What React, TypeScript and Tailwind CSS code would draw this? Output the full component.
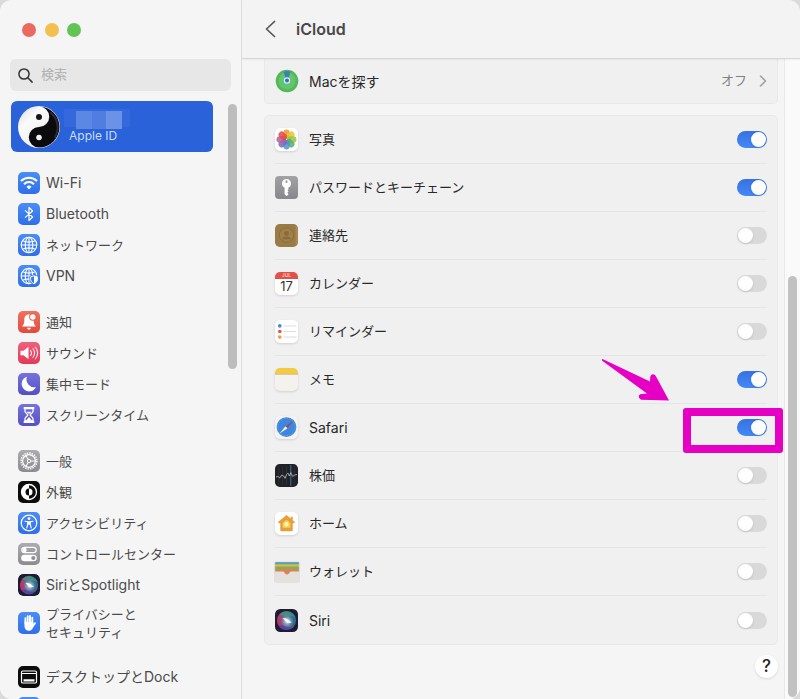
import type { ReactNode } from "react";

const BLUE = "bg-linear-to-b from-[#4a8df6] to-[#2f6fea]";
const RED = "bg-linear-to-b from-[#f0705f] to-[#e24a3d]";
const PINK = "bg-linear-to-b from-[#f0607c] to-[#e23a58]";
const INDIGO = "bg-linear-to-b from-[#7672dc] to-[#5450c4]";
const GRAY = "bg-linear-to-b from-[#acacb0] to-[#8b8b90]";
const BLACK = "bg-[#0c0c0c]";

// Japanese glyphs are full-width, so labels without any Latin run a size smaller
const labelSize = (text: string) => (/[A-Za-z]/.test(text) ? "text-[14px]" : "text-[13px]");

function Globe() {
  return (
    <g fill="none" stroke="#fff" strokeWidth="1.1">
      <circle cx="11" cy="11" r="7.8" />
      <ellipse cx="11" cy="11" rx="3.8" ry="7.8" />
      <path d="M11 3.2v15.6M3.2 11h15.6M4.6 6.8q6.4 2.6 12.8 0M4.6 15.2q6.4 -2.6 12.8 0" />
    </g>
  );
}

function WifiGlyph() {
  return (
    <g fill="none" stroke="#fff" strokeWidth="2">
      <path d="M3 9a11.5 11.5 0 0 1 16 0" />
      <path d="M6 12.2a7 7 0 0 1 10 0" />
      <path d="M11 17.4l-2.5-2.7a3.5 3.5 0 0 1 5 0z" fill="#fff" stroke="none" />
    </g>
  );
}

function BluetoothGlyph() {
  return <path d="M7 7.4l7.6 6.6-3.6 3.6V4.4l3.6 3.6L7 14.600" fill="none" stroke="#fff" strokeWidth="1.2" strokeLinejoin="round" />;
}

function VpnGlyph() {
  return (
    <>
      <Globe />
      <path d="M16 9.5l4.500 1.5v3.500q0 3.500-4.500 5.500-4.500-2-4.500-5.500V11z" fill="#3777ec" />
      <path d="M16 10.800l3.400 1.100v2.700q0 2.600-3.400 4.200-3.400-1.600-3.400-4.200v-2.700z" fill="none" stroke="#fff" strokeWidth="1" />
      <path d="M16 10.800l3.400 1.100v2.700q0 2.600-3.400 4.200z" fill="#fff" />
    </>
  );
}

function BellGlyph() {
  return (
    <>
      <path d="M11 3.5c-3.2 0-4.7 2.2-4.7 5 0 4-.6 5-2.3 7h14c-1.7-2-2.3-3-2.3-7 0-2.8-1.5-5-4.7-5zM9 16.8h4q-.5 2-2 2t-2-2z" fill="#fff" />
      <circle cx="14.8" cy="6" r="3.7" fill="#ea5e50" />
      <circle cx="14.8" cy="6" r="2.7" fill="#fff" />
    </>
  );
}

function SpeakerGlyph() {
  return (
    <>
      <path d="M2.5 8.7h3l5-4v12.6l-5-4h-3z" fill="#fff" />
      <path d="M12.7 8.3q2 2.7 0 5.4M15 6.6q3.400 4.400 0 8.800M17.400 5q4.600 6 0 12" fill="none" stroke="#fff" strokeWidth="1" strokeLinecap="round" />
    </>
  );
}

function MoonGlyph() {
  return <path d="M9 3.7a7.5 7.5 0 1 0 9 10.3A7.7 7.7 0 0 1 9 3.7z" fill="#fff" />;
}

function HourglassGlyph() {
  return (
    <>
      <path d="M5.7 3h10.6v2.300H5.700zM5.700 16.700h10.600V19H5.700z" fill="#fff" />
      <path d="M7 5v2.3c0 1.7 2.8 2.5 2.8 3.7S7 13 7 14.7V17h8v-2.3c0-1.7-2.8-2.5-2.8-3.7S15 9 15 7.3V5" fill="none" stroke="#fff" strokeWidth="1.3" />
      <path d="M8.5 7.8h5L11 10zM11 13l3 3.5H8z" fill="#fff" />
    </>
  );
}

function GearGlyph() {
  return (
    <g fill="none" stroke="#fff">
      <circle cx="11" cy="11" r="7.900" strokeWidth="1.500" strokeDasharray="1.400 1.080" />
      <circle cx="11" cy="11" r="6.400" strokeWidth="1.200" />
      <circle cx="11" cy="11" r="1.700" strokeWidth="1" />
      <path d="M12.700 11h4.700M10.200 9.500L7.800 5.500M10.200 12.500l-2.400 4" strokeWidth="1.100" />
    </g>
  );
}

function AppearanceGlyph() {
  return (
    <>
      <circle cx="11" cy="11" r="7.5" fill="none" stroke="#fff" strokeWidth="1.3" />
      <path d="M11 3.5a7.5 7.5 0 0 0 0 15v-4a3.5 3.5 0 0 1 0-7z" fill="#fff" />
      <path d="M11 7.5a3.5 3.5 0 0 1 0 7z" fill="#fff" />
    </>
  );
}

function AccessibilityGlyph() {
  return (
    <>
      <circle cx="11" cy="11" r="7.8" fill="none" stroke="#fff" strokeWidth="1.2" />
      <circle cx="11" cy="6.6" r="1.4" fill="#fff" />
      <path d="M7 9.2l2.8.5v2.300l-1 4M15 9.200l-2.800.5v2.300l1 4" fill="none" stroke="#fff" strokeWidth="1.100" strokeLinecap="round" strokeLinejoin="round" />
      <path d="M9.500 9.300h3v3.500h-3z" fill="#fff" />
    </>
  );
}

function ControlCenterGlyph() {
  return (
    <>
      <rect x="3.8" y="4.3" width="14.4" height="5.4" rx="2.7" fill="none" stroke="#fff" strokeWidth="1.2" />
      <circle cx="6.5" cy="7" r="2.2" fill="#fff" />
      <rect x="3.2" y="11.7" width="15.6" height="6.6" rx="3.3" fill="#fff" />
      <circle cx="15.3" cy="15" r="2.1" fill="#8f8f94" />
    </>
  );
}

function HandGlyph() {
  return (
    <>
      <g stroke="#fff" strokeWidth="1.900" strokeLinecap="round" fill="none">
        <path d="M7.400 11V6.200M9.700 10V4.200M12 10V3.900M14.300 11V5.600" />
        <path d="M14.400 14.800l2.600-3.600" />
      </g>
      <path d="M6.450 10h8.800l.5 3c-.6 3.400-2 5.800-4.700 5.800-3 0-4.600-2-4.600-5z" fill="#fff" />
    </>
  );
}

function DockGlyph() {
  return (
    <>
      <rect x="3.500" y="5" width="15" height="12" rx="1.300" fill="none" stroke="#fff" strokeWidth="1.200" />
      <path d="M4 7.500h14" stroke="#fff" strokeWidth="1" />
      <path d="M5.500 13.200h11v2.300h-11z" fill="#fff" />
    </>
  );
}

function SiriArt() {
  return (
    <svg viewBox="0 0 24 24" className="size-full" aria-hidden="true">
      <defs>
        <radialGradient id="siri-core" cx="0.52" cy="0.52" r="0.5">
          <stop offset="0" stopColor="#fff" />
          <stop offset="0.22" stopColor="#c9e8f5" stopOpacity="0.8" />
          <stop offset="1" stopColor="#5fb6d6" stopOpacity="0" />
        </radialGradient>
        <linearGradient id="siri-orb" x1="0" y1="0.6" x2="1" y2="0.4">
          <stop offset="0" stopColor="#c92a5c" />
          <stop offset="0.42" stopColor="#6d6488" />
          <stop offset="1" stopColor="#226a8c" />
        </linearGradient>
      </defs>
      <rect width="24" height="24" rx="5.500" fill="#1c1d33" />
      <circle cx="12" cy="12" r="10" fill="url(#siri-orb)" />
      <path d="M5 5.500A10 10 0 0 1 21.500 9q-3-2-8-1.500T5 5.500z" fill="#3f9c7c" opacity=".7" />
      <path d="M4 18a10 10 0 0 0 15 1q-4 1-8-1t-7 0z" fill="#4b3fae" opacity=".8" />
      <circle cx="12.500" cy="12.500" r="7" fill="url(#siri-core)" />
      <path d="M8 9.500q3.500 0 5.500 1.500t4 3q-4.500 1.200-6-.5T8 9.500z" fill="#fff" opacity=".9" />
    </svg>
  );
}

type NavItem = { label: string; tile: string; glyph: ReactNode; lines?: string[]; full?: boolean };

const navGroups: NavItem[][] = [
  [
    { label: "Wi-Fi", tile: BLUE, glyph: <WifiGlyph /> },
    { label: "Bluetooth", tile: BLUE, glyph: <BluetoothGlyph /> },
    { label: "ネットワーク", tile: BLUE, glyph: <Globe /> },
    { label: "VPN", tile: BLUE, glyph: <VpnGlyph /> },
  ],
  [
    { label: "通知", tile: RED, glyph: <BellGlyph /> },
    { label: "サウンド", tile: PINK, glyph: <SpeakerGlyph /> },
    { label: "集中モード", tile: INDIGO, glyph: <MoonGlyph /> },
    { label: "スクリーンタイム", tile: INDIGO, glyph: <HourglassGlyph /> },
  ],
  [
    { label: "一般", tile: GRAY, glyph: <GearGlyph /> },
    { label: "外観", tile: BLACK, glyph: <AppearanceGlyph /> },
    { label: "アクセシビリティ", tile: BLUE, glyph: <AccessibilityGlyph /> },
    { label: "コントロールセンター", tile: GRAY, glyph: <ControlCenterGlyph /> },
    { label: "SiriとSpotlight", tile: "", glyph: <SiriArt />, full: true },
    { label: "プライバシーとセキュリティ", lines: ["プライバシーと", "セキュリティ"], tile: BLUE, glyph: <HandGlyph /> },
  ],
  [
    { label: "デスクトップとDock", tile: BLACK, glyph: <DockGlyph /> },
    { label: "", tile: BLUE, glyph: <circle cx="11" cy="11" r="4" fill="#fff" /> },
  ],
];

function NavRow({ item }: { item: NavItem }) {
  return (
    <li>
      <a href="#" className={`flex items-center gap-1.5 ${item.lines ? "h-[46px]" : "h-[31px]"}`}>
        <span className={`size-[22px] shrink-0 overflow-hidden rounded-[5px] ${item.tile}`}>
          {item.full ? item.glyph : <svg viewBox="0 0 22 22" className="size-full" aria-hidden="true">{item.glyph}</svg>}
        </span>
        <span className={`whitespace-nowrap leading-[18px] text-[#4a4a4a] ${labelSize(item.label)}`}>
          {item.lines ? item.lines.map((l) => <span key={l} className="block">{l}</span>) : item.label}
        </span>
      </a>
    </li>
  );
}

function YinYang() {
  return (
    <svg viewBox="0 0 42 42" className="size-[42px] shrink-0" aria-hidden="true">
      <defs>
        <linearGradient id="yang" x1="0" y1="0" x2="1" y2="1">
          <stop offset="0" stopColor="#d9d9d9" />
          <stop offset="0.3" stopColor="#fafafa" />
          <stop offset="1" stopColor="#e8e8e8" />
        </linearGradient>
      </defs>
      <circle cx="21" cy="21" r="21" fill="url(#yang)" />
      <path d="M21 0.5a20.5 20.5 0 0 1 0 41a10.25 10.25 0 0 1 0-20.5a10.25 10.25 0 0 0 0-20.5z" fill="#0b0b0d" />
      <path d="M33 7a19 19 0 0 1 4 24" fill="none" stroke="#2c2d32" strokeWidth="2" strokeLinecap="round" />
      <circle cx="21" cy="11" r="3" fill="#161616" />
      <circle cx="21" cy="31.5" r="2.800" fill="#f2f2f2" />
    </svg>
  );
}

function Sidebar() {
  return (
    <aside className="flex w-[242px] shrink-0 flex-col border-r border-[#dedede] bg-[#f5f5f5]">
      <div className="flex h-[59px] shrink-0 items-center gap-2 pl-[22px]">
        <button aria-label="閉じる" className="size-3.5 rounded-full bg-[#ea6a5f]" />
        <button aria-label="しまう" className="ml-px size-3.5 rounded-full bg-[#f3bf4f]" />
        <button aria-label="拡大" className="size-3.5 rounded-full bg-[#61c454]" />
      </div>
      <label className="mx-[10px] flex h-8 shrink-0 items-center gap-2 rounded-[6px] bg-[#e7e7e7] pl-2">
        <svg viewBox="0 0 15 15" className="size-[15px] shrink-0" fill="none" stroke="#333" strokeWidth="1.5" strokeLinecap="round" aria-hidden="true">
          <circle cx="6" cy="6" r="5.1" />
          <path d="M9.8 9.8l4.300 4.300" />
        </svg>
        <input type="text" placeholder="検索" aria-label="検索" className="min-w-0 flex-1 bg-transparent text-[13px] outline-none placeholder:text-[#b0b0b0]" />
      </label>

      <div className="flex min-h-0 flex-1 pt-[10px]">
        <nav className="flex min-w-0 flex-1 flex-col overflow-hidden pl-[11px]">
          <a href="#" className="flex h-[51px] shrink-0 items-center rounded-[6px] bg-[#2962d9] pl-[7px]">
            <YinYang />
            <span className="ml-1 flex flex-col">
              {/* Account name, pixelated */}
              <span className="flex h-[18px] w-[66px] bg-[#3468dc] pt-0.5 pl-3">
                <span className="h-[18px] w-4 bg-[#5c87e2]" />
                <span className="h-[18px] w-3.5 bg-[#4f7de0]" />
                <span className="h-[18px] w-4 bg-[#6a92e6]" />
              </span>
              <span className="pl-[5px] text-[12px] leading-[18px] text-[#cddcfb]">Apple ID</span>
            </span>
          </a>
          <div className="flex flex-col gap-[15px] pt-[15px] pl-[7px]">
            {navGroups.map((group, i) => (
              <ul key={i}>
                {group.map((item) => <NavRow key={item.label} item={item} />)}
              </ul>
            ))}
          </div>
        </nav>
        <div className="ml-[15px] flex w-[13px] shrink-0 pt-[3px]">
          <div className="h-[265px] w-[9px] rounded-full bg-[#bdbdbd]" />
        </div>
      </div>
    </aside>
  );
}

function FindMacIcon() {
  return (
    <svg viewBox="0 0 24 24" className="size-6" aria-hidden="true">
      <circle cx="12" cy="12" r="11.3" fill="#52b95b" />
      <circle cx="12" cy="12" r="8.5" fill="#64c56c" />
      <path d="M8.500 2.500q3.500-1.200 7 0L13 11h-2z" fill="#3f7fb9" />
      <circle cx="12" cy="11.500" r="3.200" fill="#d9ecf5" />
      <circle cx="12" cy="11.500" r="2" fill="#2f6fd2" />
    </svg>
  );
}

const petals = ["#f2942f", "#e3c72f", "#9cc23c", "#4fae72", "#4f92cb", "#7469bb", "#b55ba0", "#e04a42"];

function PhotosIcon() {
  return (
    <svg viewBox="0 0 24 24" className="size-[23px] rounded-[5px] bg-white shadow-sm" aria-hidden="true">
      {petals.map((color, i) => (
        <rect key={color} x="8.700" y="1.600" width="6.600" height="9.800" rx="3.300" fill={color} opacity="0.850" transform={`rotate(${i * 45} 12 12)`} />
      ))}
    </svg>
  );
}

function KeyIcon() {
  return (
    <svg viewBox="0 0 24 24" className="size-[23px] rounded-[4px] bg-linear-to-b from-[#a2a2a5] to-[#88888c]" aria-hidden="true">
      <path d="M12 3a4.800 4.800 0 0 0-2 9.100v6.900l2 2 2.200-2-1.300-1.500 1.300-1.500-1.200-1.400 1-.8v-1.700A4.800 4.800 0 0 0 12 3z" fill="#fff" />
      <circle cx="12" cy="6" r="1.200" fill="#97979b" />
    </svg>
  );
}

function ContactsIcon() {
  return (
    <svg viewBox="0 0 24 24" className="size-[23px]" aria-hidden="true">
      <rect width="24" height="24" rx="5" fill="#9b7b45" />
      <path d="M21.500 1.200q2.500 1.300 2.500 4v13.600q0 3-2.500 4z" fill="#ab8a52" />
      <circle cx="12" cy="11.500" r="7.500" fill="#a08148" stroke="#866a3c" strokeWidth="0.900" />
      <circle cx="12" cy="9.800" r="2.500" fill="#876b3d" />
      <path d="M7.500 16q0-3 4.500-3t4.500 3z" fill="#876b3d" />
    </svg>
  );
}

function CalendarIcon() {
  return (
    <span className="flex size-[23px] flex-col overflow-hidden rounded-[5px] bg-white text-center shadow-sm">
      <span className="h-[7px] bg-[#e2504a] text-[5px] leading-[7px] font-semibold text-[#f7c8c5]">JUL</span>
      <span className="text-[13px] leading-[15px] text-[#333]">17</span>
    </span>
  );
}

function RemindersIcon() {
  return (
    <svg viewBox="0 0 24 24" className="size-[23px] rounded-[5px] bg-white shadow-sm" aria-hidden="true">
      <path d="M9 6.200h13M9 12h13M9 17.800h13" stroke="#d2d2d2" strokeWidth="0.800" />
      <circle cx="5" cy="6.200" r="1.900" fill="#3e8ed0" />
      <circle cx="5" cy="12" r="1.900" fill="#e0574f" />
      <circle cx="5" cy="17.800" r="1.900" fill="#ee9a4a" />
    </svg>
  );
}

function NotesIcon() {
  return (
    <svg viewBox="0 0 24 24" className="size-[23px] rounded-[5px] bg-[#f3f2ef] shadow-sm" aria-hidden="true">
      <path d="M0 0h24v6.200H0z" fill="#f4ca45" />
      <path d="M0 6.700h24" stroke="#c9b98a" strokeWidth="0.800" />
    </svg>
  );
}

function SafariIcon() {
  return (
    <svg viewBox="0 0 24 24" className="size-[23px] rounded-[5px] bg-[#f3f3f3] shadow-sm" aria-hidden="true">
      <circle cx="12" cy="11.500" r="10.300" fill="#3f86dc" />
      <circle cx="12" cy="11.500" r="9" fill="none" stroke="#7db3ea" strokeWidth="1" strokeDasharray="0.600 1.200" />
      <path d="M19.500 4.500l-6.500 8.200-2-2z" fill="#8d4a6c" />
      <path d="M4.500 18.500l6.500-7.800 2 2z" fill="#eef2f7" />
    </svg>
  );
}

function StocksIcon() {
  return (
    <svg viewBox="0 0 24 24" className="size-[23px]" aria-hidden="true">
      <rect width="24" height="24" rx="5" fill="#202126" />
      <path d="M4 2v20M8 2v20M12 2v20M20 2v20" stroke="#383a40" strokeWidth="0.600" />
      <path d="M16.500 1v22" stroke="#3f7ca6" strokeWidth="1" />
      <path d="M1 13.500l2-.5 2 1.500 2-3 2 1 1.500 2.500 1.500-4 1.500-1.500 1.500 3 1.500-3.500 2 4 2-1.500 2.500-.5" fill="none" stroke="#b3b8c0" strokeWidth="0.900" />
    </svg>
  );
}

function HomeIcon() {
  return (
    <svg viewBox="0 0 24 24" className="size-[23px] rounded-[5px] bg-white shadow-sm" aria-hidden="true">
      <path d="M12 3L3.500 10.300q-.7 1 .4 1.400h1.600V19q0 1 1 1h11q1 0 1-1v-7.300h1.600q1.100-.4.4-1.400l-2-1.700V5h-2v1.900z" fill="#e5a03c" />
      <path d="M12 8l-4 3.500V16.500h8v-5z" fill="#f9cf55" />
      <circle cx="12" cy="12.800" r="2.300" fill="#fff2b8" />
    </svg>
  );
}

function WalletIcon() {
  return (
    <svg viewBox="0 0 26 22" className="h-[22px] w-[26px] shrink-0" aria-hidden="true">
      <rect x="0.300" y="0.500" width="25.400" height="21" rx="2" fill="#d4d3cd" />
      <path d="M1.200 1.200h23.600V4H1.200z" fill="#4f9fc0" />
      <path d="M1.200 3.200h23.600V6H1.200z" fill="#dcb94a" />
      <path d="M1.200 5.500h23.600V9H1.200z" fill="#7fb14e" />
      <path d="M1.200 8.300h23.600v7H1.200z" fill="#e77b60" />
      <path d="M0.300 10.500h8.700q1 0 1.500 1.200.8 1.800 2.500 1.800t2.500-1.800q.5-1.200 1.500-1.200h8.700v9q0 2-2 2H2.300q-2 0-2-2z" fill="#e2e1dc" />
    </svg>
  );
}

const services = [
  { label: "写真", icon: <PhotosIcon />, on: true },
  { label: "パスワードとキーチェーン", icon: <KeyIcon />, on: true },
  { label: "連絡先", icon: <ContactsIcon />, on: false },
  { label: "カレンダー", icon: <CalendarIcon />, on: false },
  { label: "リマインダー", icon: <RemindersIcon />, on: false },
  { label: "メモ", icon: <NotesIcon />, on: true },
  { label: "Safari", icon: <SafariIcon />, on: true, marked: true },
  { label: "株価", icon: <StocksIcon />, on: false },
  { label: "ホーム", icon: <HomeIcon />, on: false },
  { label: "ウォレット", icon: <WalletIcon />, on: false },
  { label: "Siri", icon: <SiriArt />, on: false },
];

function Marker() {
  return (
    <>
      <span className="pointer-events-none absolute top-1 -right-4 h-[45px] w-[100px] rounded-[3px] border-8 border-[#e500c3]" />
      <svg viewBox="0 0 70 46" className="pointer-events-none absolute -top-[46px] right-[97px] h-[46px] w-[70px]" aria-hidden="true">
        <path d="M2.500 1L50 23.500L50.300 18.500Q52 14.500 55.500 17.500L69 42.500L41 41.800Q37 39 40 36.300L47 35.500L2.500 3Q1 1.500 2.500 1z" fill="#e500c3" />
      </svg>
    </>
  );
}

function Toggle({ id, on }: { id: string; on: boolean }) {
  return (
    <input
      id={id}
      type="checkbox"
      defaultChecked={on}
      className="flex h-[17px] w-[30px] shrink-0 appearance-none rounded-full bg-[#d9d9d9] p-px before:size-[15px] before:rounded-full before:bg-white before:shadow-sm before:content-[''] checked:justify-end checked:bg-linear-to-b checked:from-[#3871e0] checked:to-[#4288f8]"
    />
  );
}

export default function App() {
  return (
    <div className="h-screen bg-[#dadada] font-['Inter','Noto_Sans_CJK_JP',sans-serif]">
      <div className="flex h-full overflow-hidden rounded-xl bg-[#f5f5f5]">
        <Sidebar />

        <main className="flex min-w-0 flex-1 flex-col">
          <header className="z-10 flex h-[59px] shrink-0 items-center gap-[20px] border-b border-[#d6d6d6] bg-[#f3f3f3] pl-[23px] shadow-xs">
            <button aria-label="戻る">
              <svg viewBox="0 0 11 18" className="h-[18px] w-[11px]" fill="none" stroke="#555" strokeWidth="1.7" strokeLinecap="round" strokeLinejoin="round" aria-hidden="true">
                <path d="M9.500 1.500L1.500 9l8 7.500" />
              </svg>
            </button>
            <h1 className="text-[16px] font-semibold text-[#484848]">iCloud</h1>
          </header>

          <div className="flex min-h-0 flex-1">
            <div className="min-w-0 flex-1 overflow-hidden pr-[6px] pl-[22px]">
              <a href="#" className="flex h-[45px] items-center rounded-b-[5px] border border-t-0 border-[#e8e8e8] bg-[#f0f0f0] px-[10px]">
                <FindMacIcon />
                <span className="ml-[10px] flex-1 text-[14px] text-[#282828]">Macを探す</span>
                <span className="text-[13px] text-[#808080]">オフ</span>
                <svg viewBox="0 0 8 12" className="ml-3 h-3 w-2" fill="none" stroke="#a3a3a3" strokeWidth="1.6" strokeLinecap="round" strokeLinejoin="round" aria-hidden="true">
                  <path d="M1.500 1l5 5-5 5" />
                </svg>
              </a>

              <ul className="mt-[11px] rounded-[5px] border border-[#e8e8e8] bg-[#f0f0f0] px-[10px]">
                {services.map((s, i) => (
                  <li key={s.label} className="relative flex h-12 items-center border-b border-[#e5e5e5] last:border-b-0">
                    <span className="flex size-[23px] shrink-0 items-center justify-center">{s.icon}</span>
                    <label htmlFor={`service-${i}`} className={`ml-[11px] flex-1 text-[#282828] ${labelSize(s.label)}`}>
                      {s.label}
                    </label>
                    <Toggle id={`service-${i}`} on={s.on} />
                    {s.marked && <Marker />}
                  </li>
                ))}
              </ul>

              <div className="flex justify-end pt-[10px]">
                <button aria-label="ヘルプ" className="size-[23px] rounded-full bg-white text-[17px] leading-[23px] font-medium text-[#222] shadow">?</button>
              </div>
            </div>

            <div className="flex w-4 shrink-0 flex-col justify-end border-l border-[#e8e8e8] bg-[#fafafa] pb-0.5 pl-[3px]">
              <div className="h-[66%] w-[9px] rounded-full bg-[#c1c1c1]" />
            </div>
          </div>
        </main>
      </div>
    </div>
  );
}
